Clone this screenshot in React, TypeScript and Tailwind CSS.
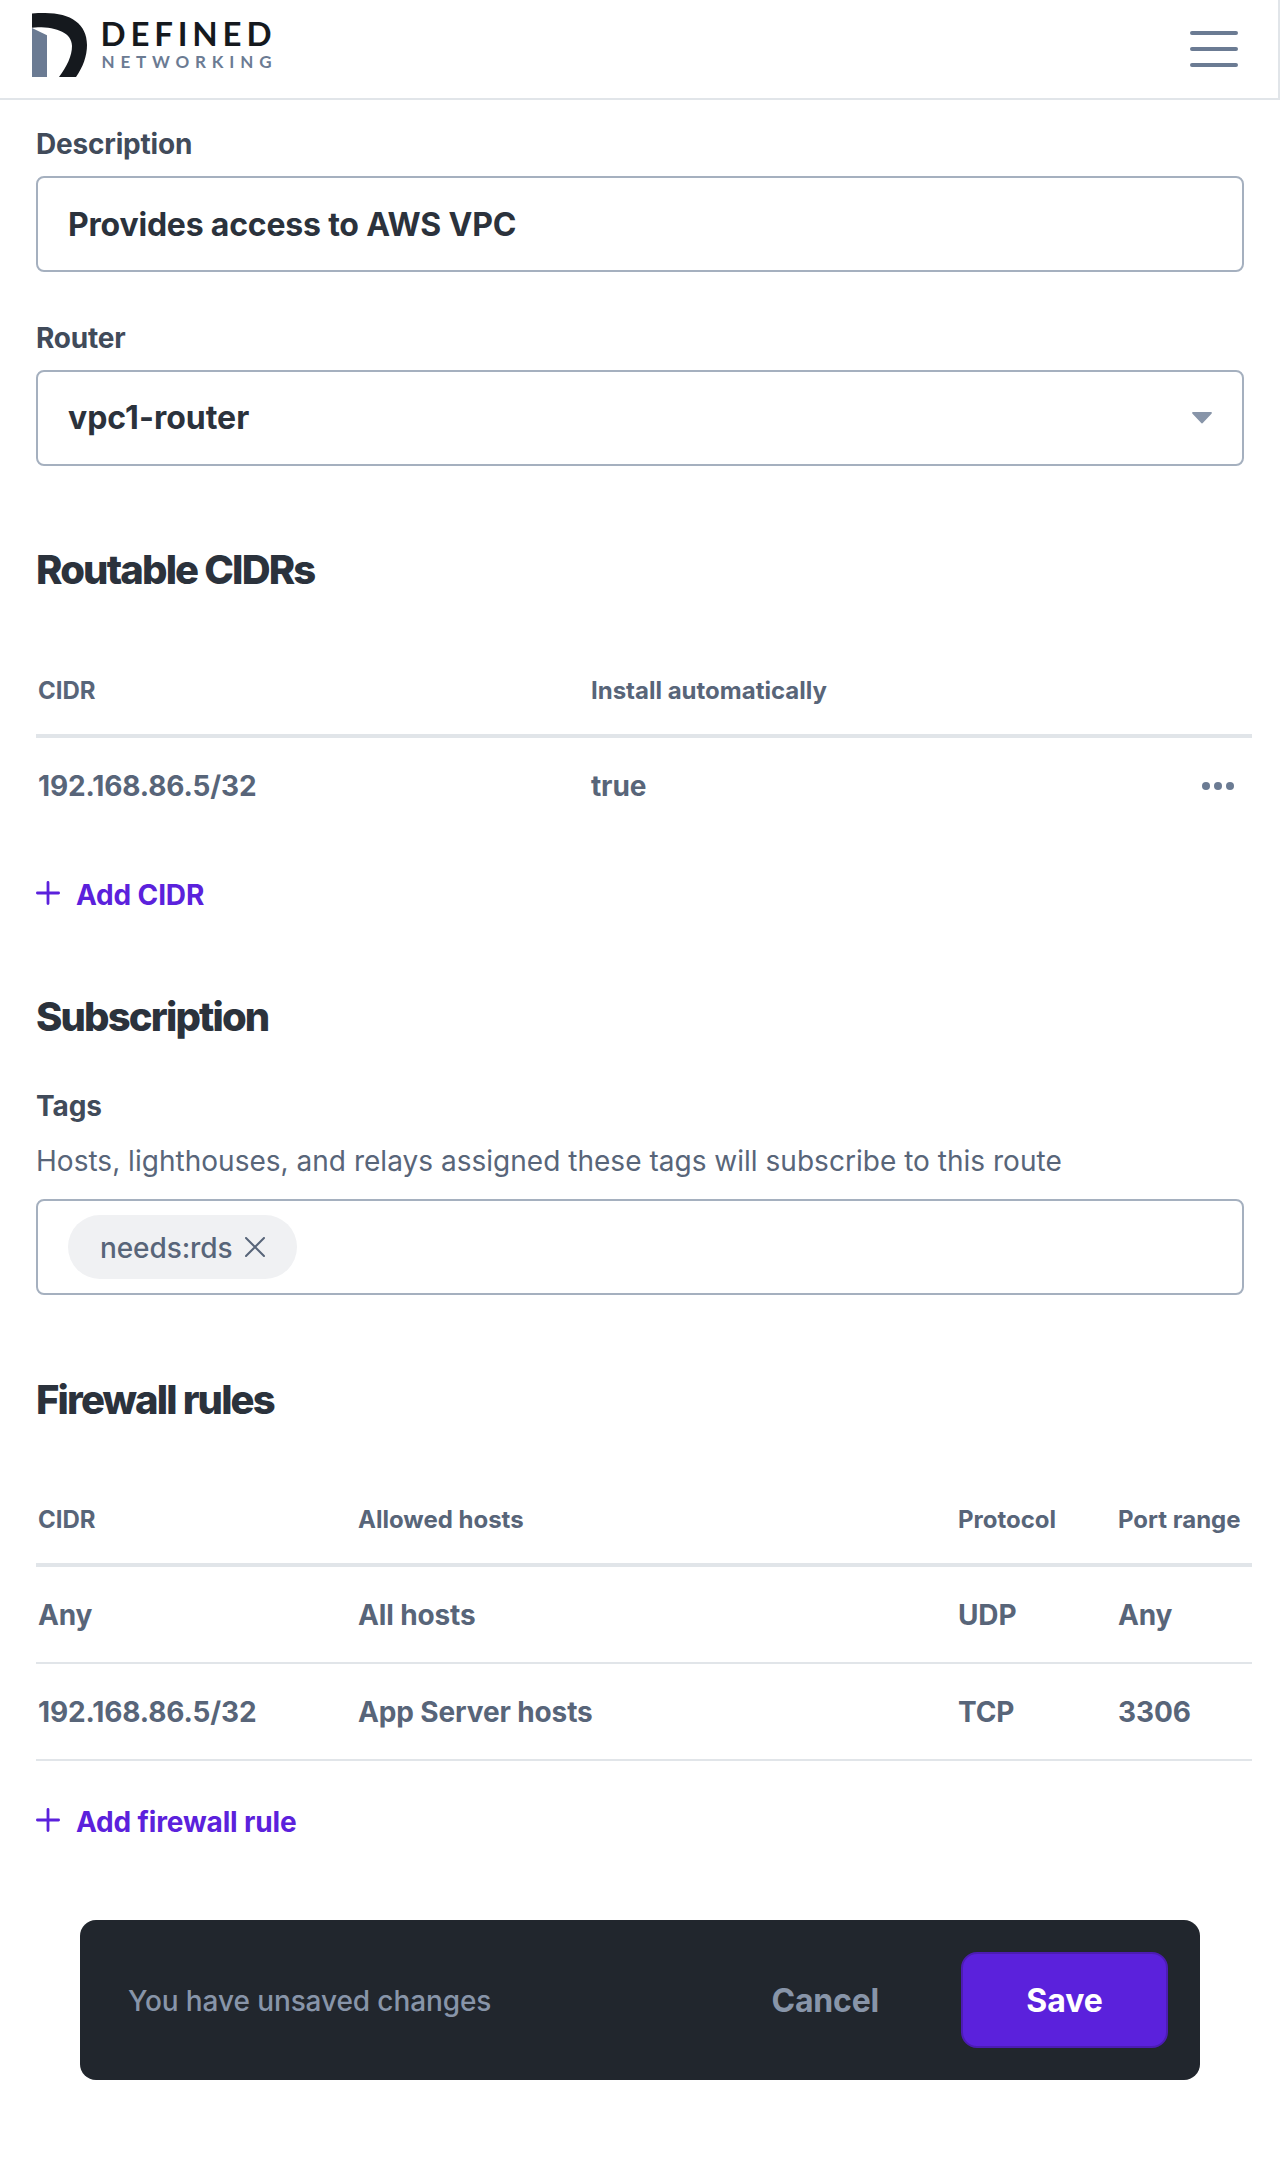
import type { ReactNode } from 'react';

const cidrs = [{ cidr: '192.168.86.5/32', install: 'true' }];

const rules = [
  { cidr: 'Any', hosts: 'All hosts', protocol: 'UDP', port: 'Any' },
  { cidr: '192.168.86.5/32', hosts: 'App Server hosts', protocol: 'TCP', port: '3306' },
];

function Logo() {
  return (
    <svg width="248" height="72" viewBox="0 0 248 72" className="shrink-0">
      <path d="M0 1.6C4 1 8 1 13 1C39 1 55 12 55 33C55 44 51 55 44 65H27C35 54 40 44 40 34C40 21 25 15.300 6 15.300L0 15.800Z" fill="#15191e" />
      <path d="M0 16L15 23.200V65H0Z" fill="#6b7b93" />
      <g style={{ fontFamily: 'Lato, sans-serif' }}>
        <text x="68.500" y="34" fontSize="33" fontWeight="700" fill="#15191e" textLength="171" lengthAdjust="spacing">DEFINED</text>
        <text x="69.500" y="56" fontSize="17" fontWeight="700" fill="#6b7b93" textLength="170" lengthAdjust="spacing">NETWORKING</text>
      </g>
    </svg>
  );
}

function Field({ label, children }: { label: string; children: ReactNode }) {
  return (
    <div>
      <p className="mb-3 text-[28px] leading-10 font-[650] tracking-[-0.2px] text-[#414b5a]">{label}</p>
      {children}
    </div>
  );
}

function SectionTitle({ children }: { children: ReactNode }) {
  return <h2 className="text-[40px] leading-[48px] font-extrabold tracking-[-1.85px] text-[#2b323c]">{children}</h2>;
}

function AddButton({ children }: { children: ReactNode }) {
  return (
    <button className="flex items-start gap-4 text-[28px] leading-10 font-[650] tracking-[-0.15px] text-[#5b21dc]">
      <svg width="24" height="24" viewBox="0 0 24 24" className="mt-1.5" fill="none" stroke="currentColor" strokeWidth="2.800" strokeLinecap="round">
        <path d="M12 1.400V22.600M1.400 12H22.600" />
      </svg>
      {children}
    </button>
  );
}

export default function App() {
  return (
    <div className="min-h-[2160px] bg-white font-['Inter',sans-serif]">
      <header className="flex h-[100px] justify-between border-r-2 border-b-2 border-[#e1e5e9] pt-3 pr-10 pl-8">
        <Logo />
        <svg width="48" height="72" viewBox="0 0 48 72" stroke="#6b7b93" strokeWidth="4" strokeLinecap="round">
          <path d="M2 21H46M2 37H46M2 53H46" />
        </svg>
      </header>

      <main className="pt-6 pr-9 pl-9">
        <Field label="Description">
          <div className="flex h-24 items-center rounded-lg border-2 border-[#a5b0bf] px-[30px] pt-0.5 text-[32px] font-[650] tracking-[-0.2px] text-[#2b323c]">
            Provides access to AWS VPC
          </div>
        </Field>

        <div className="mt-[46px]">
          <Field label="Router">
            <div className="flex h-24 items-center justify-between rounded-lg border-2 border-[#a5b0bf] px-[30px] text-[32px] font-[650] text-[#2b323c]">
              vpc1-router
              <svg width="20" height="12" viewBox="0 0 20 12" fill="#8895a9">
                <path d="M1 0H19Q20.500 .5 19.500 1.700L11 10.800Q10 12 9 10.800L.5 1.700Q-.5 .5 1 0Z" />
              </svg>
            </div>
          </Field>
        </div>

        <section className="mt-20">
          <SectionTitle>Routable CIDRs</SectionTitle>
          <div className="mt-[52px] -mr-2 text-[28px] font-[650] tracking-[-0.13px] text-[#586579]">
            <div className="grid h-[92px] grid-cols-[553px_1fr] items-center border-b-4 border-[#e1e5e9] pt-0.5 pl-0.5 text-2xl font-bold tracking-normal">
              <span>CIDR</span>
              <span>Install automatically</span>
            </div>
            {cidrs.map((row) => (
              <div key={row.cidr} className="grid h-[97px] grid-cols-[553px_1fr_32px] items-center border-b-2 border-transparent pr-[18px] pl-0.5">
                <span>{row.cidr}</span>
                <span>{row.install}</span>
                <svg width="32" height="8" viewBox="0 0 32 8" fill="#6b7b93">
                  <circle cx="4" cy="4" r="4" />
                  <circle cx="16" cy="4" r="4" />
                  <circle cx="28" cy="4" r="4" />
                </svg>
              </div>
            ))}
          </div>
          <div className="mt-10">
            <AddButton>Add CIDR</AddButton>
          </div>
        </section>

        <section className="mt-[78px]">
          <SectionTitle>Subscription</SectionTitle>
          <p className="mt-[45px] text-[28px] leading-10 font-[650] tracking-[-0.1px] text-[#414b5a]">Tags</p>
          <p className="mt-[15px] text-[28px] leading-10 font-[420] tracking-[0.02px] text-[#586579]">
            Hosts, lighthouses, and relays assigned these tags will subscribe to this route
          </p>
          <div className="mt-[18px] flex h-24 items-center rounded-lg border-2 border-[#a5b0bf] px-[30px]">
            <div className="flex h-16 items-center gap-[13px] rounded-full bg-[#f0f1f3] px-8 text-[28px] font-[550] tracking-[-0.1px] text-[#586579]">
              <span className="pt-0.5">needs:rds</span>
              <svg width="20" height="20" viewBox="0 0 20 20" fill="none" stroke="currentColor" strokeWidth="2" strokeLinecap="round">
                <path d="M1 1L19 19M19 1L1 19" />
              </svg>
            </div>
          </div>
        </section>

        <section className="mt-[81px]">
          <SectionTitle>Firewall rules</SectionTitle>
          <div className="mt-[51px] -mr-2 text-[28px] font-[650] tracking-[-0.13px] text-[#586579]">
            <div className="grid h-[92px] grid-cols-[320px_600px_160px_1fr] items-center border-b-4 border-[#e1e5e9] pt-0.5 pl-0.5 text-2xl font-bold tracking-normal">
              <span>CIDR</span>
              <span>Allowed hosts</span>
              <span>Protocol</span>
              <span>Port range</span>
            </div>
            {rules.map((rule) => (
              <div key={rule.cidr} className="grid h-[97px] grid-cols-[320px_600px_160px_1fr] items-center border-b-2 border-[#e1e5e9] pl-0.5">
                <span>{rule.cidr}</span>
                <span>{rule.hosts}</span>
                <span>{rule.protocol}</span>
                <span>{rule.port}</span>
              </div>
            ))}
          </div>
          <div className="mt-[41px]">
            <AddButton>Add firewall rule</AddButton>
          </div>
        </section>
      </main>

      <footer className="mx-20 mt-[78px] flex h-40 items-center rounded-2xl bg-[#21262d] pr-8 pl-12">
        <span className="pt-0.5 text-[28px] font-[550] tracking-[-0.1px] text-[#8895a9]">You have unsaved changes</span>
        <button className="mr-[82px] ml-auto pt-0.5 text-[32px] font-[650] tracking-[-0.2px] text-[#8895a9]">Cancel</button>
        <button className="h-24 w-[207px] rounded-2xl border-2 border-[#4c1cb3] bg-[#5b21dc] pt-0.5 text-[32px] font-[650] tracking-[-0.1px] text-white">Save</button>
      </footer>
    </div>
  );
}
